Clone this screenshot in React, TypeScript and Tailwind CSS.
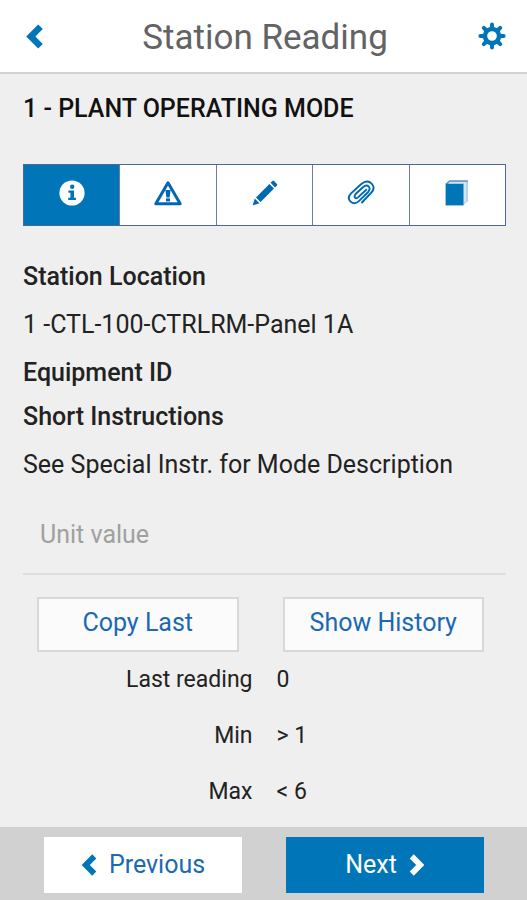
import { useState } from "react";
import type { ReactNode } from "react";

const ChevronIcon = ({ className }: { className?: string }) => (
  <svg viewBox="0 0 17 25" className={className} fill="currentColor" aria-hidden="true">
    <path d="M12.2 0.4 16.8 5 9.4 12.5 16.8 20 12.2 24.6 0.2 12.5Z" />
  </svg>
);

const toothAngles = [0, 45, 90, 135, 180, 225, 270, 315];

const GearIcon = () => (
  <svg viewBox="0 0 28 28" className="h-7 w-7" fill="currentColor" aria-hidden="true">
    <path
      fillRule="evenodd"
      d="M14 4.8a9.2 9.2 0 1 0 0 18.4a9.2 9.2 0 1 0 0-18.4ZM14 9.2a4.8 4.8 0 1 1 0 9.6a4.8 4.8 0 1 1 0-9.6Z"
    />
    {toothAngles.map((angle) => (
      <path
        key={angle}
        d="M11 6.4Q12.4 5 12 2.4A2 2 0 0 1 16 2.4Q15.6 5 17 6.4Z"
        transform={`rotate(${angle} 14 14)`}
      />
    ))}
  </svg>
);

const InfoIcon = () => (
  <svg viewBox="0 0 26 26" className="h-[26px] w-[26px]" aria-hidden="true">
    <circle cx="13" cy="13" r="12.6" fill="#fff" />
    <g fill="#0075b7">
      <circle cx="13.2" cy="6.8" r="2.2" />
      <path d="M9.4 10.6h5.6v7.2h2v2.2H9.2v-2.2h2.2v-5H9.4Z" />
    </g>
  </svg>
);

const WarningIcon = () => (
  <svg viewBox="0 0 30 26" className="h-[26px] w-[30px]" aria-hidden="true">
    <path d="M15 2.8 27.2 23.8H2.8Z" fill="none" stroke="currentColor" strokeWidth="3" strokeLinejoin="round" />
    <path d="M12.4 10h5.2l-1 7.4h-3.2Z" fill="currentColor" />
    <path d="M13 18.4h4V21.4h-4Z" fill="currentColor" />
  </svg>
);

const PencilIcon = () => (
  <svg viewBox="0 0 26 26" className="h-[26px] w-[26px]" fill="currentColor" aria-hidden="true">
    <path d="M0.6 25.4 2.8 18.6 7.4 23.2Z" />
    <path d="M4 17.4 17.4 4 22 8.6 8.6 22Z" />
    <path d="M18.6 2.8 20.4 1Q21.2.2 22 1L25 4Q25.8 4.8 25 5.6L23.2 7.4Z" />
  </svg>
);

const PaperclipIcon = () => (
  <svg viewBox="0 0 28 26" className="h-[26px] w-7" fill="none" stroke="currentColor" strokeWidth="1.9" aria-hidden="true">
    <path d="M19.8 9.2 11 17.4Q9.2 19 8 17.6T8.6 14L16 7.2Q19.4 4.2 21.6 6.4T21.2 12L11.6 21.4Q7.4 25 3.6 21.6T3.8 13.6L14 4.2Q20.2-.8 24.6 3.6T24 13L14.4 23" />
  </svg>
);

const BookIcon = () => (
  <svg viewBox="0 0 24 26" className="h-[26px] w-6" aria-hidden="true">
    <path d="M1 4 4.6 1H23V21L19 24.4V4Z" fill="#b9d1ea" />
    <path d="M1 4.2 4.6 1H22.8" fill="none" stroke="#5c93c4" strokeWidth="1.4" />
    <path d="M4 3h16v19" fill="none" stroke="#e9f2fa" strokeWidth="1.2" />
    <path d="M.6 3.8H18.6V25.4H.6Z" fill="#0075b7" />
  </svg>
);

const tabs: { name: string; icon: ReactNode }[] = [
  { name: "Info", icon: <InfoIcon /> },
  { name: "Alerts", icon: <WarningIcon /> },
  { name: "Notes", icon: <PencilIcon /> },
  { name: "Attachments", icon: <PaperclipIcon /> },
  { name: "Manual", icon: <BookIcon /> },
];

const readings = [
  { label: "Last reading", value: "0" },
  { label: "Min", value: "> 1" },
  { label: "Max", value: "< 6" },
];

export default function App() {
  const [activeTab, setActiveTab] = useState("Info");
  const [unitValue, setUnitValue] = useState("");

  return (
    <div className="flex min-h-screen flex-col bg-[#efefef] font-['Roboto',sans-serif] text-[25px] text-[#222]">
      <header className="flex h-[74px] items-center justify-between border-b-2 border-[#d2d2d2] bg-white pr-[19px] pl-[22px] text-[#0075b7]">
        <button type="button" aria-label="Back" className="flex w-8 pl-1">
          <ChevronIcon className="h-[25px] w-[17px]" />
        </button>
        <h1 className="pt-[3px] text-[35px] leading-10 text-[#636363]">Station Reading</h1>
        <button type="button" aria-label="Settings" className="flex w-8 justify-center">
          <GearIcon />
        </button>
      </header>

      <main className="flex-1 pr-[21px] pl-[23px]">
        <h2 className="pt-[21px] leading-7 font-medium text-[#111]">1 - PLANT OPERATING MODE</h2>

        <div className="mt-[41px] flex h-[62px] divide-x divide-[#6f7aa8] border border-[#4f6699] bg-white">
          {tabs.map(({ name, icon }) => (
            <button
              key={name}
              type="button"
              aria-label={name}
              aria-pressed={activeTab === name}
              onClick={() => setActiveTab(name)}
              className={`flex flex-1 items-center justify-center pb-1 text-[#0068b0] ${
                activeTab === name ? "bg-[#0075b7]" : "bg-white"
              }`}
            >
              {icon}
            </button>
          ))}
        </div>

        <h3 className="mt-[37px] leading-7 font-medium">Station Location</h3>
        <p className="mt-5 leading-7">1 -CTL-100-CTRLRM-Panel 1A</p>
        <h3 className="mt-5 leading-7 font-medium">Equipment ID</h3>
        <h3 className="mt-4 leading-7 font-medium">Short Instructions</h3>
        <p className="mt-5 leading-7">See Special Instr. for Mode Description</p>

        <input
          type="text"
          aria-label="Unit value"
          placeholder="Unit value"
          value={unitValue}
          onChange={(e) => setUnitValue(e.target.value)}
          className="mt-4 h-20 w-full border-b-2 border-[#dedede] bg-transparent px-[17px] outline-none placeholder:text-[#a0a0a0]"
        />

        <div className="mt-[22px] grid grid-cols-2 gap-11 pr-[22px] pl-[14px] text-[#1a69b2]">
          <button type="button" className="h-[55px] border-2 border-[#d8d8d8] bg-[#fbfbfb] pb-[3px]">
            Copy Last
          </button>
          <button type="button" className="h-[55px] border-2 border-[#d8d8d8] bg-[#fbfbfb] pb-[3px]">
            Show History
          </button>
        </div>

        <dl className="mt-[14px] flex flex-col gap-7 text-[23px]">
          {readings.map(({ label, value }) => (
            <div key={label} className="grid grid-cols-2 gap-6 leading-7">
              <dt className="text-right">{label}</dt>
              <dd>{value}</dd>
            </div>
          ))}
        </dl>
      </main>

      <footer className="grid h-[73px] grid-cols-2 items-center gap-11 bg-[#d1d1d1] pt-[3px] pr-[43px] pl-11">
        <button type="button" className="flex h-14 items-center justify-center gap-3 bg-white pb-px text-[#1a69b2]">
          <ChevronIcon className="h-[22px] w-4 text-[#0075b7]" />
          Previous
        </button>
        <button type="button" className="flex h-14 items-center justify-center gap-3 bg-[#0075b7] pb-px text-white">
          Next
          <ChevronIcon className="h-[22px] w-4 rotate-180" />
        </button>
      </footer>
    </div>
  );
}
